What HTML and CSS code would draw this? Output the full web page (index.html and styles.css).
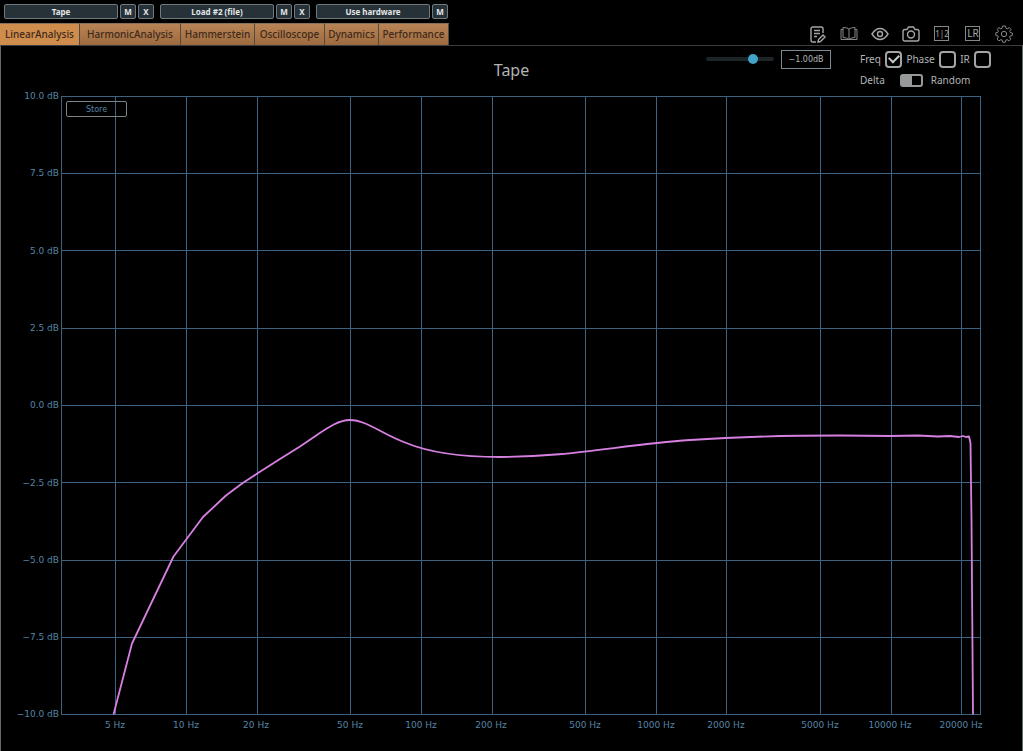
FILE: index.html
```html
<!DOCTYPE html>
<html lang="en">
<head>
    <meta charset="UTF-8" />
    <meta name="viewport" content="width=device-width, initial-scale=1.0" />
    <title>LinearAnalysis - Tape</title>
    <link rel="stylesheet" href="styles.css">
</head>
<body>

    <header>
        <div class="slots">
            <div class="slot">
                <button class="slot-name">Tape</button>
                <button class="slot-btn">M</button>
                <button class="slot-btn">X</button>
            </div>
            <div class="slot">
                <button class="slot-name">Load #2 (file)</button>
                <button class="slot-btn">M</button>
                <button class="slot-btn">X</button>
            </div>
            <div class="slot">
                <button class="slot-name">Use hardware</button>
                <button class="slot-btn">M</button>
            </div>
        </div>

        <div class="bar">
            <nav class="tabs">
                <button class="tab tab-linear active">LinearAnalysis</button>
                <button class="tab tab-harmonic">HarmonicAnalysis</button>
                <button class="tab tab-hammer">Hammerstein</button>
                <button class="tab tab-scope">Oscilloscope</button>
                <button class="tab tab-dynamics">Dynamics</button>
                <button class="tab tab-perf">Performance</button>
            </nav>

            <div class="tools">
                <button class="tool" aria-label="Notes">
                    <svg viewBox="0 0 18 18">
                        <path class="bold" d="M7 17H4Q2 17 2 15V4Q2 2 4 2H12Q14 2 14 4V8M5 5.500H11M5 8.500H11M5 11.500H8"/>
                        <path class="bold" d="M9 17L9.500 14.500L14 10L16 12L11.500 16.500Z"/>
                    </svg>
                </button>
                <button class="tool" aria-label="Manual">
                    <svg viewBox="0 0 18 18">
                        <path d="M9 4Q7 2.500 3 2.500V12.500Q7 12.500 9 14.500Q11 12.500 15 12.500V2.500Q11 2.500 9 4V14.500M3 4.500H1V14.500H17V4.500H15"/>
                    </svg>
                </button>
                <button class="tool" aria-label="View">
                    <svg viewBox="0 0 18 18">
                        <path class="bold" d="M1 9Q4.500 3.500 9 3.500T17 9Q13.500 14.500 9 14.500T1 9Z"/>
                        <circle class="bold" cx="9" cy="9" r="2.500"/>
                    </svg>
                </button>
                <button class="tool" aria-label="Screenshot">
                    <svg viewBox="0 0 18 18">
                        <path class="bold" d="M3 4.500H5L6.500 2H11.500L13 4.500H15Q17 4.500 17 6.500V14Q17 16 15 16H3Q1 16 1 14V6.500Q1 4.500 3 4.500Z"/>
                        <circle class="bold" cx="9" cy="9.500" r="3.500"/>
                    </svg>
                </button>
                <button class="tool" aria-label="Channels 1 and 2">
                    <svg viewBox="0 0 18 18">
                        <rect x="1.500" y="1.500" width="14" height="14"/>
                        <text class="ch" x="9" y="12">1|2</text>
                    </svg>
                </button>
                <button class="tool" aria-label="Left and right">
                    <svg viewBox="0 0 18 18">
                        <rect x="1.500" y="1.500" width="14" height="14"/>
                        <text class="lr" x="9" y="12">LR</text>
                    </svg>
                </button>
                <button class="tool" aria-label="Settings">
                    <svg viewBox="0 0 18 18">
                        <path d="M7.500 1H10.500L11 3.300L12.300 3.900L14.300 2.600L16 4.500L14.700 6.400L15.200 7.500L17.300 8V10.500L15.200 11L14.600 12.200L15.800 14.100L13.900 15.900L12 14.600L10.800 15.100L10.400 17.200H7.600L7.100 15.100L5.900 14.600L4 15.900L2.100 14L3.400 12.100L2.900 10.900L.800 10.500V7.800L2.900 7.300L3.400 6.100L2.200 4.200L4 2.500L5.800 3.800L7 3.300Z"/>
                        <circle cx="9" cy="9" r="2.700"/>
                    </svg>
                </button>
            </div>
        </div>
    </header>

    <main>
        <div class="panel-head">
            <h1>Tape</h1>
            <div class="controls">
                <input class="gain" type="range" min="0" max="100" value="72" aria-label="Gain" />
                <input class="gain-value" type="text" value="−1.00dB" aria-label="Gain value" />
                <div class="options">
                    <div class="option-row">
                        <label for="freq">Freq</label>
                        <input class="check" type="checkbox" id="freq" checked />
                        <label for="phase">Phase</label>
                        <input class="check" type="checkbox" id="phase" />
                        <label for="ir">IR</label>
                        <input class="check" type="checkbox" id="ir" />
                    </div>
                    <div class="option-row signal">
                        <label for="signal">Delta</label>
                        <input class="switch" type="checkbox" id="signal" />
                        <label for="signal">Random</label>
                    </div>
                </div>
            </div>
        </div>

        <div class="plot">
            <button class="store">Store</button>
            <svg class="chart" viewBox="1 92 1021 659" role="img" aria-label="Frequency response of Tape">
                <!-- frequency lines -->
                <path class="grid" d="M61.500 96V715M115.500 96V715M186.500 96V715M257.500 96V715M350.500 96V715M421.500 96V715M492.500 96V715M585.500 96V715M656.500 96V715M726.500 96V715M820.500 96V715M891.500 96V715M961.500 96V715M980.500 96V715"/>
                <!-- level lines -->
                <path class="grid" d="M61 96.500H981M61 173.500H981M61 250.500H981M61 328.500H981M61 405.500H981M61 482.500H981M61 560.500H981M61 637.500H981M61 714.500H981"/>

                <g class="level">
                    <text x="59" y="99">10.0 dB</text>
                    <text x="59" y="176">7.5 dB</text>
                    <text x="59" y="254">5.0 dB</text>
                    <text x="59" y="331">2.5 dB</text>
                    <text x="59" y="408">0.0 dB</text>
                    <text x="59" y="486">−2.5 dB</text>
                    <text x="59" y="563">−5.0 dB</text>
                    <text x="59" y="640">−7.5 dB</text>
                    <text x="59" y="717">−10.0 dB</text>
                </g>
                <g class="freq">
                    <text x="115" y="728">5 Hz</text>
                    <text x="186" y="728">10 Hz</text>
                    <text x="256" y="728">20 Hz</text>
                    <text x="350" y="728">50 Hz</text>
                    <text x="421" y="728">100 Hz</text>
                    <text x="491" y="728">200 Hz</text>
                    <text x="585" y="728">500 Hz</text>
                    <text x="656" y="728">1000 Hz</text>
                    <text x="726" y="728">2000 Hz</text>
                    <text x="820" y="728">5000 Hz</text>
                    <text x="890" y="728">10000 Hz</text>
                    <text x="961" y="728">20000 Hz</text>
                </g>

                <path class="curve" d="M113.500 714.500L132 643.500L173.500 556.500L203 517L226 495.500L242 483.500L258 473L280 459L300 446.500L314 437C326 429 338 420 350 420C366 420 382 434 405 442.500C430 453 460 457 500 457C570 457 620 445 690 440C740 436.500 790 435.500 840 435.500L890 436L918 435.500L938 436.500L950 436L959 437L963 436L966 437L969 436.500L970.500 443L971.500 520L973 714.500"/>
            </svg>
        </div>
    </main>

</body>
</html>
```
FILE: styles.css
```css
* {
    box-sizing: border-box;
}

body {
    margin: 0;
    background-color: #000;
    color: #b2b5b6;
    font-family: "Noto Sans", "Open Sans", sans-serif;
    font-size: 10px;
}

button, input {
    margin: 0;
    padding: 0;
    font-family: inherit;
}

button {
    cursor: pointer;
}

/* processor slots */
.slots {
    display: flex;
    gap: 6px;
    padding: 4px;
}

.slot {
    display: flex;
    gap: 2px;
}

.slot-name, .slot-btn {
    height: 15px;
    background-color: #263238;
    border: 1px solid #6d7a7f;
    border-radius: 2px;
    color: #e4e7e8;
    font-size: 8px;
    font-weight: bold;
    line-height: 13px;
}

.slot-name {
    width: 114px;
}

.slot-btn {
    width: 16px;
}

/* tabs and tool icons */
.bar {
    display: flex;
    justify-content: space-between;
    height: 22px;
}

.tabs {
    display: flex;
}

.tab {
    padding-bottom: 2px;
    border: 0;
    border-right: 1px solid #54493f;
    border-top: 1px solid #87705a;
    background: linear-gradient(#b98455, #9d6b40);
    color: #40291a;
    font-size: 10px;
    font-weight: 500;
    white-space: nowrap;
}

.tab.active {
    background: #cf8d4d;
}

.tab-linear {
    width: 80px;
}

.tab-harmonic {
    width: 101px;
}

.tab-hammer {
    width: 74px;
}

.tab-scope {
    width: 70px;
}

.tab-dynamics {
    width: 54px;
}

.tab-perf {
    width: 70px;
}

.tools {
    display: flex;
    align-items: center;
    gap: 13px;
    padding-right: 10px;
}

.tool {
    width: 18px;
    height: 18px;
    background: none;
    border: 0;
}

.tool svg {
    display: block;
    width: 18px;
    height: 18px;
    fill: none;
    stroke: #85888a;
    stroke-width: 1;
}

.tool .bold {
    stroke: #a4a7a8;
    stroke-width: 1.4;
}

.tool text {
    fill: #a4a7a8;
    stroke: none;
    text-anchor: middle;
}

.ch {
    font-size: 8px;
}

.lr {
    font-size: 10px;
}

/* panel */
main {
    border: 1px solid #5f6a6b;
    border-top-color: #3a3d3f;
    border-bottom: 0;
}

.panel-head {
    display: grid;
    grid-template-columns: 1fr auto 1fr;
    height: 46px;
}

h1 {
    grid-column: 2;
    margin: 13px 0 0;
    font-size: 16px;
    font-weight: normal;
    line-height: 22px;
}

.controls {
    display: flex;
    justify-content: flex-end;
    align-items: flex-start;
    padding: 4px 31px 0 0;
}

.gain {
    appearance: none;
    width: 68px;
    height: 18px;
    margin-right: 7px;
    background: none;
}

.gain::-webkit-slider-runnable-track {
    height: 4px;
    background-color: #1c2629;
    border-radius: 2px;
}

.gain::-webkit-slider-thumb {
    appearance: none;
    width: 10px;
    height: 10px;
    margin-top: -3px;
    background-color: #42a2c8;
    border-radius: 50%;
}

.gain-value {
    width: 50px;
    height: 19px;
    margin-right: 29px;
    background-color: #000;
    border: 1px solid #7c8b91;
    color: #b2b5b6;
    font-family: "DejaVu Sans", sans-serif;
    font-size: 8px;
    text-align: center;
}

.option-row {
    display: flex;
    align-items: center;
    justify-content: space-between;
    width: 131px;
    height: 18px;
}

.signal {
    justify-content: flex-start;
    height: 24px;
}

.check {
    appearance: none;
    display: grid;
    place-items: center;
    width: 17px;
    height: 17px;
    border: 2px solid #a2a5a6;
    border-radius: 4px;
}

.check:checked::before {
    content: "";
    width: 8px;
    height: 5px;
    margin-bottom: 3px;
    border: solid #c4c7c8;
    border-width: 0 0 2px 2px;
    transform: rotate(-45deg);
}

.switch {
    appearance: none;
    width: 23px;
    height: 13px;
    margin: 0 8px 0 15px;
    background: linear-gradient(90deg, #969899 55%, #000 55%);
    border: 2px solid #969899;
    border-radius: 3px;
}

/* frequency plot */
.plot {
    position: relative;
}

.chart {
    display: block;
    width: 100%;
    height: auto;
}

.grid {
    fill: none;
    stroke: #3c6281;
    stroke-width: 1;
}

.level, .freq {
    fill: #5684a6;
    font-family: "DejaVu Sans", sans-serif;
    font-size: 9px;
}

.level {
    text-anchor: end;
}

.freq {
    text-anchor: middle;
}

.curve {
    fill: none;
    stroke: #d880e2;
    stroke-width: 1.8;
    stroke-linejoin: round;
}

/* sits over the top left corner of the grid */
.store {
    position: absolute;
    top: 9px;
    left: 65px;
    width: 61px;
    height: 16px;
    background: none;
    border: 1px solid #7c8485;
    border-radius: 2px;
    color: #5684a6;
    font-family: "DejaVu Sans", sans-serif;
    font-size: 8px;
}
```
